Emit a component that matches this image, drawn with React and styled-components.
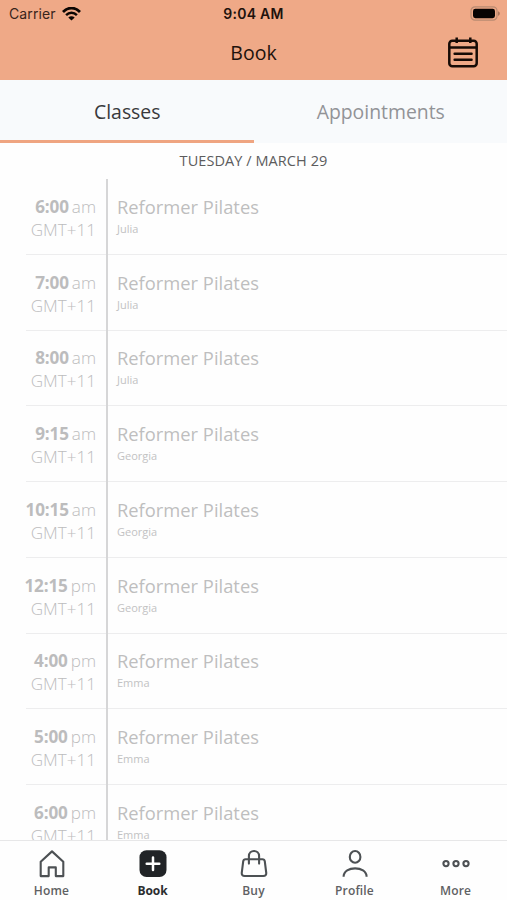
import React from 'react';
import styled, { createGlobalStyle } from 'styled-components';

const GlobalStyle = createGlobalStyle`
  * { box-sizing: border-box; }
  body { margin: 0; background: #fff; }
`;

const Screen = styled.div`
  width: 507px;
  height: 900px;
  display: flex;
  flex-direction: column;
  overflow: hidden;
  background: #fefefe;
  font-family: 'Open Sans', 'Noto Sans', sans-serif;
  white-space: nowrap;
`;

const Header = styled.header`
  flex: none;
  height: 79.5px;
  background: #efa987;
  color: #21120c;
`;

const StatusBar = styled.div`
  height: 27px;
  padding: 0 7px 0 9px;
  display: grid;
  grid-template-columns: 1fr auto 1fr;
  align-items: center;
  font-family: Inter, sans-serif;
`;

const Carrier = styled.div`
  display: flex;
  align-items: center;
  gap: 6px;
  font-size: 14px;
  letter-spacing: 0.12px;
  color: #38241b;
`;

const Clock = styled.div`
  margin-right: 2px;
  font-size: 14px;
  font-weight: 600;
  letter-spacing: 0.25px;
`;

const BatterySlot = styled.div`
  display: flex;
  justify-content: flex-end;
`;

const TitleBar = styled.div`
  height: 52px;
  padding: 0 28px;
  display: grid;
  grid-template-columns: 1fr auto 1fr;
  align-items: center;
`;

const Title = styled.h1`
  grid-column: 2;
  margin: 0;
  font-size: 19.5px;
  line-height: 26px;
  font-weight: 400;
`;

const CalendarButton = styled.button`
  justify-self: end;
  display: flex;
  padding: 0;
  border: 0;
  background: none;
  color: #160b06;
`;

const Tabs = styled.div`
  flex: none;
  height: 63px;
  display: flex;
  background: #f8fafc;
`;

const Tab = styled.button`
  flex: 1;
  padding: 4px 0 0 1px;
  border: 0;
  border-bottom: 3.5px solid ${(p) => (p.$active ? '#efa581' : 'transparent')};
  background: none;
  font: 400 19.4px/26px 'Open Sans', sans-serif;
  color: ${(p) => (p.$active ? '#38393b' : '#929397')};
`;

const DateHeading = styled.h2`
  flex: none;
  height: 36.5px;
  margin: 0;
  text-align: center;
  font-size: 14.5px;
  font-weight: 400;
  line-height: 36px;
  letter-spacing: 0.07px;
  color: #5c5c5d;
`;

const ClassList = styled.div`
  flex: 1;
  min-height: 0;
  overflow: hidden;
`;

const ClassRow = styled.div`
  height: 75.75px;
  display: grid;
  grid-template-columns: 80px 1fr;
  margin-left: 26px;
  border-bottom: 1.5px solid #ededee;
`;

const TimeCell = styled.div`
  height: 75.75px;
  padding: 15.75px 10px 0 0;
  border-right: 2px solid #d6d6d7;
  margin-right: -2px;
  display: flex;
  flex-direction: column;
  align-items: flex-end;
  line-height: 23px;
  color: #bcbcbd;
`;

const Time = styled.div`
  display: flex;
  gap: 3px;
  font-size: 17.1px;
`;

const Hour = styled.span`
  font-weight: 700;
  letter-spacing: -0.15px;
`;

const Meridiem = styled.span`
  font-weight: 300;
`;

const Zone = styled.div`
  font-size: 17.1px;
  font-weight: 300;
`;

const ClassCell = styled.div`
  padding: 15.75px 0 0 11px;
`;

const ClassName = styled.div`
  font-size: 18.35px;
  line-height: 23px;
  color: #bebebf;
`;

const Teacher = styled.div`
  font-size: 11px;
  line-height: 21px;
  color: #c2c2c3;
`;

const BottomNav = styled.nav`
  flex: none;
  height: 60.5px;
  display: grid;
  grid-template-columns: repeat(5, 101px);
  justify-content: center;
  border-top: 1.5px solid #e7e7e8;
  background: #fefefe;
`;

const NavItem = styled.button`
  padding: 8px 0 0;
  border: 0;
  background: none;
  display: flex;
  flex-direction: column;
  align-items: center;
  gap: 4px;
  font: ${(p) => (p.$active ? 700 : 600)} 12px/16px 'Open Sans', sans-serif;
  letter-spacing: ${(p) => (p.$active ? '-0.1px' : '0.15px')};
  color: ${(p) => (p.$active ? '#2b2d2f' : '#5f6163')};
`;

const NavSvg = styled.svg`
  display: block;
  fill: none;
  stroke: #4d5154;
  stroke-width: 2.1;
  stroke-linejoin: round;
`;

const WifiIcon = () => (
  <svg width="19" height="14" viewBox="0 0 19 14" fill="none" stroke="#0c0603" strokeWidth="2.8">
    <path d="M1 4.9C6-.2 13-.2 18 4.9" />
    <path d="M4.1 8.1c3.1-3 7.7-3 10.8 0" strokeWidth="2.5" />
    <path d="M9.5 13.6 6.3 10.6c1.8-1.7 4.6-1.7 6.4 0Z" fill="#0c0603" stroke="none" />
  </svg>
);

const BatteryIcon = () => (
  <svg width="30" height="15" viewBox="0 0 30 15" fill="none">
    <rect x="1" y=".8" width="26" height="13.4" rx="4" stroke="#b98a71" strokeWidth="1.2" />
    <rect x="3" y="2.8" width="22" height="9.4" rx="2.4" fill="#080403" />
    <path d="M28.2 5.2c2 .8 2 3.8 0 4.6Z" fill="#9c6c55" />
  </svg>
);

const CalendarIcon = () => (
  <svg width="32" height="32" viewBox="0 0 32 32" fill="none" stroke="currentColor" strokeWidth="2.5">
    <rect x="2.3" y="3.7" width="27.4" height="25.6" rx="3" />
    <path d="M2.3 10.5h27.4M9.7 .6v5.5M23.3 .6v5.5" />
    <path d="M7.6 16.8h17M7.6 22.7h17" strokeLinecap="round" strokeWidth="2.4" />
  </svg>
);

const HomeIcon = () => (
  <NavSvg width="30" height="30" viewBox="0 0 30 30">
    <path d="M3.7 12.7 15 2.4l11.3 10.3v14.4h-7.5v-8.7h-7.1v8.7h-8Z" />
  </NavSvg>
);

const BookIcon = () => (
  <NavSvg width="30" height="30" viewBox="0 0 30 30">
    <rect x="1.5" y="1.2" width="27" height="26.8" rx="7" fill="#212427" stroke="none" />
    <path d="M15 8.4v12.6M8.7 14.7h12.6" stroke="#fff" strokeWidth="2.5" strokeLinecap="round" />
  </NavSvg>
);

const BuyIcon = () => (
  <NavSvg width="30" height="30" viewBox="0 0 30 30">
    <path d="M6.6 10.2h16.8q2.1 0 2.4 2.1l1.4 11.2q.4 3.5-2.9 3.5H5.7q-3.3 0-2.9-3.5l1.4-11.2q.3-2.1 2.4-2.1Z" />
    <path d="M9.9 14.6V7.2c0-7 10.2-7 10.2 0v7.4" strokeLinecap="round" />
  </NavSvg>
);

const ProfileIcon = () => (
  <NavSvg width="30" height="30" viewBox="0 0 30 30">
    <ellipse cx="15.1" cy="7.9" rx="5.3" ry="5.9" />
    <path d="M3.6 27.8c0-11.3 23-11.3 23 0" />
  </NavSvg>
);

const MoreIcon = () => (
  <NavSvg width="30" height="30" viewBox="0 0 30 30">
    <circle cx="5" cy="14.6" r="2.6" />
    <circle cx="15" cy="14.6" r="2.6" />
    <circle cx="25" cy="14.6" r="2.6" />
  </NavSvg>
);

const CLASSES = [
  ['6:00', 'am', 'Julia'],
  ['7:00', 'am', 'Julia'],
  ['8:00', 'am', 'Julia'],
  ['9:15', 'am', 'Georgia'],
  ['10:15', 'am', 'Georgia'],
  ['12:15', 'pm', 'Georgia'],
  ['4:00', 'pm', 'Emma'],
  ['5:00', 'pm', 'Emma'],
  ['6:00', 'pm', 'Emma'],
];

const NAV = [
  ['Home', HomeIcon],
  ['Book', BookIcon],
  ['Buy', BuyIcon],
  ['Profile', ProfileIcon],
  ['More', MoreIcon],
];

export default function App() {
  return (
    <Screen>
      <GlobalStyle />
      <Header>
        <StatusBar>
          <Carrier>Carrier <WifiIcon /></Carrier>
          <Clock>9:04 AM</Clock>
          <BatterySlot><BatteryIcon /></BatterySlot>
        </StatusBar>
        <TitleBar>
          <Title>Book</Title>
          <CalendarButton aria-label="Calendar"><CalendarIcon /></CalendarButton>
        </TitleBar>
      </Header>
      <Tabs>
        <Tab $active>Classes</Tab>
        <Tab>Appointments</Tab>
      </Tabs>
      <DateHeading>TUESDAY / MARCH 29</DateHeading>
      <ClassList>
        {CLASSES.map(([hour, meridiem, teacher]) => (
          <ClassRow key={hour + meridiem}>
            <TimeCell>
              <Time><Hour>{hour}</Hour><Meridiem>{meridiem}</Meridiem></Time>
              <Zone>GMT+11</Zone>
            </TimeCell>
            <ClassCell>
              <ClassName>Reformer Pilates</ClassName>
              <Teacher>{teacher}</Teacher>
            </ClassCell>
          </ClassRow>
        ))}
      </ClassList>
      <BottomNav>
        {NAV.map(([label, Icon]) => (
          <NavItem key={label} $active={label === 'Book'}>
            <Icon />
            {label}
          </NavItem>
        ))}
      </BottomNav>
    </Screen>
  );
}
